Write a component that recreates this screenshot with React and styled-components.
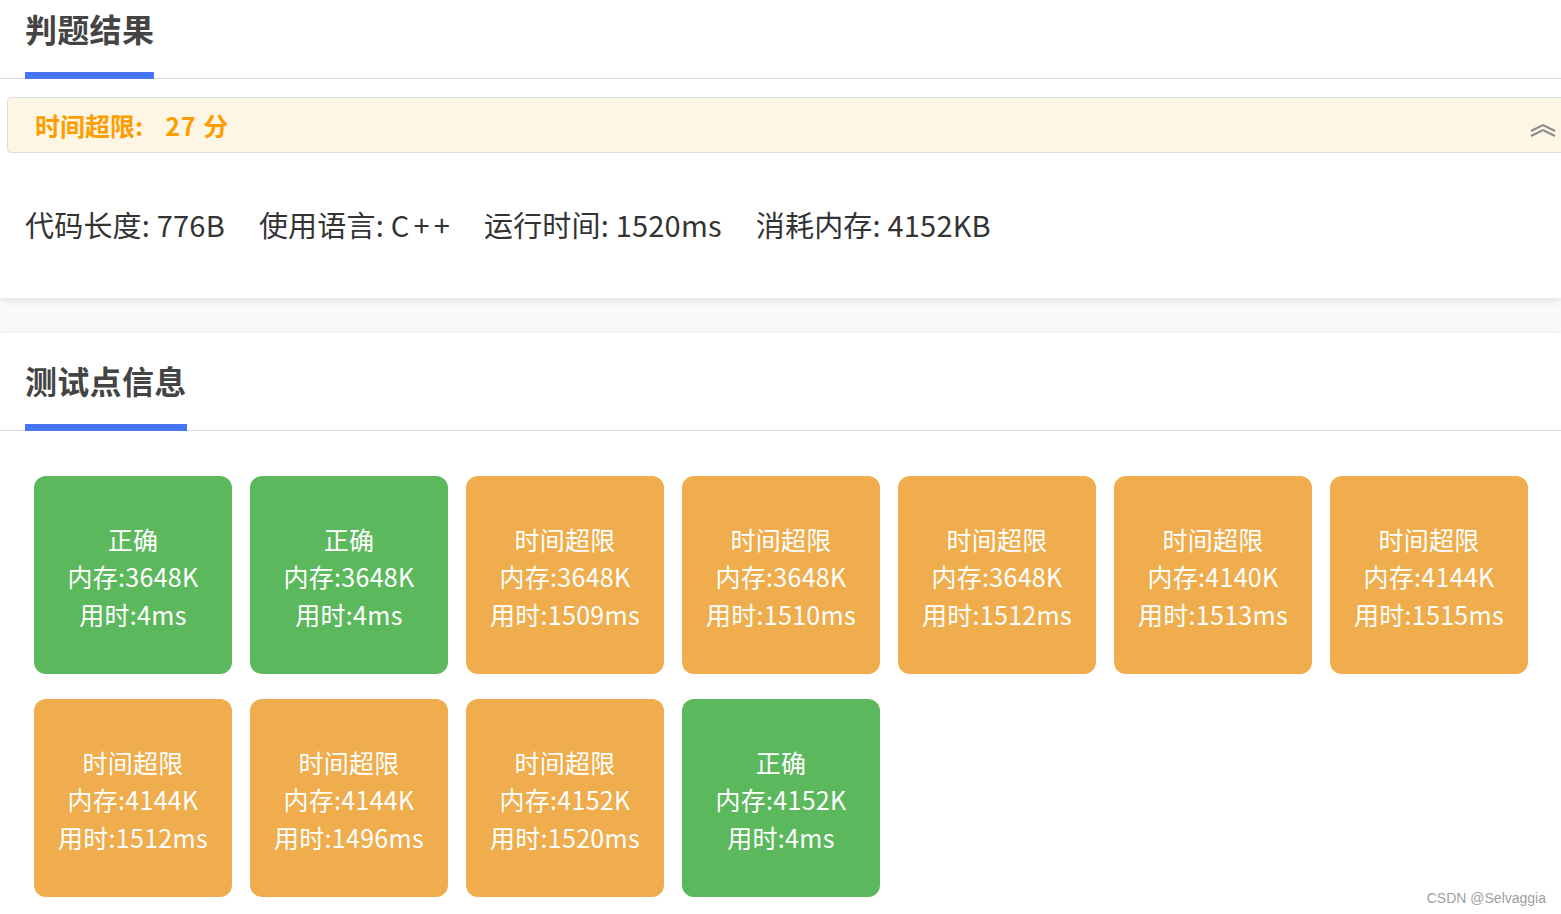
import React from "react";
import styled, { createGlobalStyle } from "styled-components";

const GlobalStyle = createGlobalStyle`
  html, body {
    margin: 0;
    padding: 0;
    background: #fafafa;
    font-family: "Noto Sans CJK SC", "Noto Sans", sans-serif;
    overflow: hidden;
  }
`;

const cases = [
  { ok: true, mem: "3648K", time: "4ms" },
  { ok: true, mem: "3648K", time: "4ms" },
  { ok: false, mem: "3648K", time: "1509ms" },
  { ok: false, mem: "3648K", time: "1510ms" },
  { ok: false, mem: "3648K", time: "1512ms" },
  { ok: false, mem: "4140K", time: "1513ms" },
  { ok: false, mem: "4144K", time: "1515ms" },
  { ok: false, mem: "4144K", time: "1512ms" },
  { ok: false, mem: "4144K", time: "1496ms" },
  { ok: false, mem: "4152K", time: "1520ms" },
  { ok: true, mem: "4152K", time: "4ms" },
];

export default () => {
  return (
    <Page>
      <GlobalStyle />
      <Card $top={6} $bottom={54}>
        <TabBar>
          <Tab>判题结果</Tab>
        </TabBar>
        <Alert>
          <AlertText>
            时间超限:<Score>27 分</Score>
          </AlertText>
          <Chevron viewBox="0 0 26 14" width="26" height="14">
            <path d="M1 8 L13 2 L25 8" fill="none" stroke="#8a8a8a" strokeWidth="2" />
            <path d="M1 13 L13 7 L25 13" fill="none" stroke="#8a8a8a" strokeWidth="2" />
          </Chevron>
        </Alert>
        <Stats>
          <span>代码长度: 776B</span>
          <span>
            使用语言: C<Plus>+</Plus>
            <Plus>+</Plus>
          </span>
          <span>运行时间: 1520ms</span>
          <span>消耗内存: 4152KB</span>
        </Stats>
      </Card>
      <Card $top={25} $bottom={40} $gap>
        <TabBar>
          <Tab>测试点信息</Tab>
        </TabBar>
        <Grid>
          {cases.map((c, i) => (
            <CaseBox key={i} $ok={c.ok}>
              <div>{c.ok ? "正确" : "时间超限"}</div>
              <div>内存:{c.mem}</div>
              <div>用时:{c.time}</div>
            </CaseBox>
          ))}
        </Grid>
      </Card>
      <Watermark>CSDN @Selvaggia</Watermark>
    </Page>
  );
};

const Page = styled.div`
  position: relative;
  width: 1561px;
  height: 914px;
  overflow: hidden;
`;

const Card = styled.div`
  background: #fff;
  padding: ${(p) => p.$top}px 0 ${(p) => p.$bottom}px;
  margin-top: ${(p) => (p.$gap ? "35px" : "0")};
  box-shadow: 0 2px 8px rgba(0, 0, 0, 0.12);
`;

const TabBar = styled.div`
  display: flex;
  padding-left: 25px;
  border-bottom: 1px solid #dcdcdc;
`;

const Tab = styled.div`
  font-size: 32px;
  font-weight: 700;
  line-height: 45px;
  letter-spacing: 0.3px;
  color: #444;
  padding-bottom: 21px;
  border-bottom: 7px solid #4676f6;
  margin-bottom: -1px;
`;

const Alert = styled.div`
  display: flex;
  align-items: center;
  justify-content: space-between;
  margin: 18px -12px 0 7px;
  height: 54px;
  padding: 0 16px 0 27px;
  background: #fdf6e4;
  border: 1px solid #dedede;
  border-radius: 4px;
`;

const AlertText = styled.div`
  font-size: 25px;
  font-weight: 700;
  color: #ff9d00;
`;

const Score = styled.span`
  margin-left: 22px;
  letter-spacing: 1px;
`;

const Chevron = styled.svg`
  margin-top: 10px;
`;

const Stats = styled.div`
  display: flex;
  gap: 34px;
  margin-top: 51px;
  padding-left: 25px;
  font-size: 29px;
  line-height: 40px;
  color: #333;
  letter-spacing: 0.2px;
`;

const Plus = styled.span`
  margin-left: 4px;
`;

const Grid = styled.div`
  display: grid;
  grid-template-columns: repeat(7, 198px);
  column-gap: 18px;
  row-gap: 25px;
  padding: 45px 0 0 34px;
`;

const CaseBox = styled.div`
  width: 198px;
  height: 198px;
  border-radius: 12px;
  background: ${(p) => (p.$ok ? "#5cb85c" : "#f0ad4e")};
  color: #fff;
  font-size: 25px;
  line-height: 37.5px;
  letter-spacing: 0.3px;
  display: flex;
  flex-direction: column;
  align-items: center;
  justify-content: center;
  padding-top: 4px;
  box-sizing: border-box;
`;

const Watermark = styled.div`
  position: absolute;
  right: 15px;
  bottom: 8px;
  font-family: "Liberation Sans", Arial, sans-serif;
  font-size: 14px;
  color: #a0a0a0;
`;
